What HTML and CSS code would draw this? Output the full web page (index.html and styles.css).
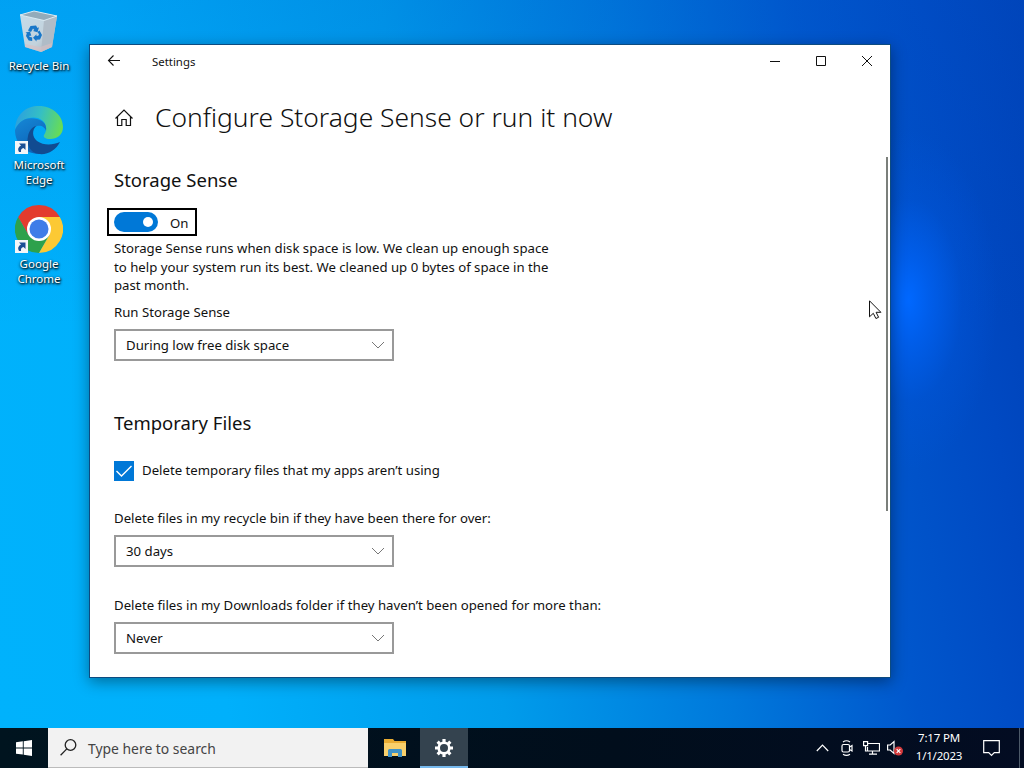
FILE: index.html
```html
<!DOCTYPE html>
<html lang="en">
<head>
    <meta charset="UTF-8">
    <meta name="viewport" content="width=device-width, initial-scale=1.0">
    <title>Settings</title>
    <link rel="stylesheet" href="styles.css">
</head>
<body>
    <div class="desktop">
        <div class="icons">
            <div class="icon">
                <svg width="48" height="50" viewBox="0 0 48 50">
                    <defs>
                        <linearGradient id="bin" x1="0" y1="0" x2="1" y2="1">
                            <stop offset="0" stop-color="#c3dcea"/>
                            <stop offset="0.6" stop-color="#c3d2dc"/>
                            <stop offset="1" stop-color="#a3adb8"/>
                        </linearGradient>
                    </defs>
                    <path d="M5 9L10 41L26 46L37 41L42 10L29 14z" fill="url(#bin)"/>
                    <path d="M29 14L42 10L37 41L26 46z" fill="#b0bcc7"/>
                    <path d="M5 9L19 5L42 10L29 14.500z" fill="#93abba" stroke="#dcebf3" stroke-width="1"/>
                    <path d="M10 38L25 41L37 37L36.500 41L26 46L10 41z" fill="#d8bfc3" opacity=".6"/>
                    <g fill="#1877c9">
                        <path d="M13 24.500l2.500-4.500 5.500-.5 1.500 2.500 1.500-.8-1.500 5-4.500-1.300 1.300-1-1.300-1.400-2 3.500z"/>
                        <path d="M24.500 24.500l2.500 4.500-2 4.500-3.500.3v1.700l-3.500-3.800 3.500-3.500v1.800l1.800-.3.700-1.500-1.500-2.300z"/>
                        <path d="M10.500 26.500l4.500-1 1.300 4.500-1.500-.6-.6 1.300 3 .8v3.500l-3.500-.5-2.700-4.500.8-2.700z"/>
                    </g>
                </svg>
                <span>Recycle Bin</span>
            </div>
            <div class="icon">
                <svg width="48" height="50" viewBox="0 0 48 50">
                    <defs>
                        <linearGradient id="edgeTop" x1="0" y1="0.3" x2="1" y2="0.5">
                            <stop offset="0" stop-color="#2b9fe0"/>
                            <stop offset="0.5" stop-color="#35bfc4"/>
                            <stop offset="1" stop-color="#68dc55"/>
                        </linearGradient>
                        <linearGradient id="edgeSide" x1="0" y1="0" x2="0.5" y2="1">
                            <stop offset="0" stop-color="#1688d6"/>
                            <stop offset="1" stop-color="#0c63b8"/>
                        </linearGradient>
                    </defs>
                    <path d="M0 24C1 9 11 1 24 1C38 1 48 11 48 22C48 30 42 34 35 34C30 34 28 32 29 30C32 26 32 20 28 16C20 9 6 13 0 24z" fill="url(#edgeTop)"/>
                    <path d="M0 25C5 13 15 12 22 14C29 16 32 20 31 26C30 22 26 20 22 21C16 24 14 30 16 36C18 43 24 48 30 48C14 52 0 41 0 25z" fill="url(#edgeSide)"/>
                    <path d="M21 21C17 25 17 32 22 36C29 41 38 40 45 37C41 45 33 50 24 49C15 48 11 39 13 31C14 26 17 22 21 21z" fill="#114b91"/>
                </svg>
                <svg class="shortcut" width="13" height="13" viewBox="0 0 13 13">
                    <rect width="13" height="13" fill="#f4f6f8"/>
                    <path d="M4 2.500h6.500v6.500l-2-2Q5.500 7.500 6 11H4Q1.500 7 6 4.500z" fill="#1a4f94"/>
                </svg>
                <span>Microsoft<br>Edge</span>
            </div>
            <div class="icon">
                <svg width="48" height="50" viewBox="0 0 48 50">
                    <path d="M3.200 13A24 24 0 0 0 24 49L34.400 31L24 25L13.600 31z" fill="#2da14c"/>
                    <path d="M44.800 13A24 24 0 0 1 24 49L34.400 31L24 13z" fill="#fcc934"/>
                    <path d="M24 13H44.800A24 24 0 0 0 3.200 13L13.600 31z" fill="#e33b2e"/>
                    <circle cx="24" cy="25" r="12" fill="#fff"/>
                    <circle cx="24" cy="25" r="9.500" fill="#3f7de8"/>
                </svg>
                <svg class="shortcut" width="13" height="13" viewBox="0 0 13 13">
                    <rect width="13" height="13" fill="#f4f6f8"/>
                    <path d="M4 2.500h6.500v6.500l-2-2Q5.500 7.500 6 11H4Q1.500 7 6 4.500z" fill="#1a4f94"/>
                </svg>
                <span>Google<br>Chrome</span>
            </div>
        </div>

        <div class="window">
            <div class="titlebar">
                <svg class="back" width="14" height="12" viewBox="0 0 14 12"><path d="M1.500 5.500h11.500M6.500 .5L1.500 5.500l5 5"/></svg>
                <span class="app-name">Settings</span>
                <div class="controls">
                    <svg width="46" height="32" viewBox="0 0 46 32"><path d="M18 16.500h10"/></svg>
                    <svg width="46" height="32" viewBox="0 0 46 32"><path d="M18.500 11.500h9v9h-9z"/></svg>
                    <svg width="46" height="32" viewBox="0 0 46 32"><path d="M18 11l10 10M28 11l-10 10"/></svg>
                </div>
            </div>
            <div class="page-header">
                <svg width="20" height="18" viewBox="0 0 20 18"><path d="M1.500 9.500L10 1l8.500 8.500M3.500 8v8.500h4.300v-6h4.400v6h4.300V8"/></svg>
                <h1>Configure Storage Sense or run it now</h1>
            </div>
            <div class="content">
                <h2>Storage Sense</h2>
                <div class="toggle">
                    <div class="switch"></div>
                    <span>On</span>
                </div>
                <p class="description">Storage Sense runs when disk space is low. We clean up enough space<br>to help your system run its best. We cleaned up 0 bytes of space in the<br>past month.</p>
                <div class="label run">Run Storage Sense</div>
                <div class="select">
                    <span>During low free disk space</span>
                    <svg width="14" height="8" viewBox="0 0 14 8"><path d="M1 1l6 6 6-6"/></svg>
                </div>
                <h2 class="temp">Temporary Files</h2>
                <div class="check">
                    <div class="box"><svg width="20" height="20" viewBox="0 0 20 20"><path d="M2.500 10l5 5L17.500 5"/></svg></div>
                    <span>Delete temporary files that my apps aren’t using</span>
                </div>
                <div class="label recycle">Delete files in my recycle bin if they have been there for over:</div>
                <div class="select">
                    <span>30 days</span>
                    <svg width="14" height="8" viewBox="0 0 14 8"><path d="M1 1l6 6 6-6"/></svg>
                </div>
                <div class="label downloads">Delete files in my Downloads folder if they haven’t been opened for more than:</div>
                <div class="select">
                    <span>Never</span>
                    <svg width="14" height="8" viewBox="0 0 14 8"><path d="M1 1l6 6 6-6"/></svg>
                </div>
            </div>
            <div class="scrollbar"></div>
        </div>

        <svg class="cursor" width="13" height="20" viewBox="0 0 13 20"><path d="M.5 .8v16l3.800-3.500 2.600 5.200 2.700-1.200-2.500-5h4.800z"/></svg>
    </div>

    <div class="taskbar">
        <div class="start">
            <svg width="16" height="16" viewBox="0 0 16 16"><path d="M0 2.300L6.800 1.300V7.500H0zM7.700 1.200L16 0V7.500H7.700zM0 8.400h6.800v6.200L0 13.700zM7.700 8.400H16V16l-8.300-1.200z" fill="#fff"/></svg>
        </div>
        <div class="search">
            <svg width="17" height="17" viewBox="0 0 17 17"><circle cx="10.500" cy="6" r="5.300"/><path d="M6.800 9.900L.6 16.200"/></svg>
            <span>Type here to search</span>
        </div>
        <div class="task explorer">
            <svg width="22" height="18" viewBox="0 0 22 18">
                <path d="M0 0h9l1.500 2H22v15H0z" fill="#e9ac32"/>
                <path d="M0 4h22v13H0z" fill="#f9d06b"/>
                <path d="M4 18v-6.500q0-1.500 1.500-1.500h11q1.500 0 1.500 1.500V18h-4v-4H8v4z" fill="#3f92c6"/>
            </svg>
        </div>
        <div class="task active">
            <svg width="20" height="20" viewBox="-10 -10 20 20">
                <circle r="5.300" fill="none" stroke="#fff" stroke-width="2.600"/>
                <g stroke="#fff" stroke-width="3.200">
                    <path d="M0-9v3M0 9V6M-9 0h3M9 0H6"/>
                    <path d="M0-9v3M0 9V6M-9 0h3M9 0H6" transform="rotate(45)"/>
                </g>
            </svg>
        </div>
        <div class="tray">
            <svg width="13" height="8" viewBox="0 0 13 8"><path d="M.8 7L6.500 1.200 12.200 7"/></svg>
            <svg class="meet" width="12" height="16" viewBox="0 0 12 16"><rect x="1" y="4.500" width="7.500" height="7.500" rx="1.500"/><path d="M8.500 7L11 5.500v5.500L8.500 9.500M2 2Q5.500-.5 9 2M2 14.200Q5.500 16.500 9 14.200"/></svg>
            <svg class="network" width="17" height="14" viewBox="0 0 17 14"><path d="M5 2.500h11.500v7.500H4.500V6M9.500 10v3M6 13.200h8M.6 .6h4v4h-4zM2.500 4.600V10h2"/></svg>
            <svg class="sound" width="17" height="16" viewBox="0 0 17 16"><path d="M.6 5h2.600L7 1.500v12L3.200 10H.6z"/><circle cx="11.500" cy="11" r="4.500" fill="#d33a3c" stroke="none"/><path d="M9.700 9.200l3.600 3.600M13.300 9.200l-3.600 3.600"/></svg>
            <div class="clock">
                <span>7:17 PM</span>
                <span>1/1/2023</span>
            </div>
            <svg class="notes" width="17" height="17" viewBox="0 0 17 17"><path d="M.7 .7h15.600v12h-5L8.500 15.500 5.700 12.700h-5z"/></svg>
        </div>
        <div class="show-desktop"></div>
    </div>
</body>
</html>
```
FILE: styles.css
```css
* {
    margin: 0;
    padding: 0;
    box-sizing: border-box;
}
body {
    width: 1024px;
    height: 768px;
    overflow: hidden;
    display: flex;
    flex-direction: column;
    font-family: "Noto Sans", "Open Sans", sans-serif;
    font-size: 13.2px;
    color: #111;
}
svg {
    display: block;
    flex: none;
}
span, h1, h2, .label, .description {
    white-space: nowrap;
}

/* desktop */
.desktop {
    position: relative;
    flex: 1;
    background:
        radial-gradient(ellipse 90px 170px at 908px 300px, #0068ff 0%, rgba(0, 98, 245, 0.75) 25%, rgba(0, 88, 225, 0.3) 60%, rgba(0, 80, 210, 0) 100%),
        linear-gradient(to bottom, rgba(0, 90, 205, 0.18), rgba(0, 100, 220, 0) 45%),
        linear-gradient(80deg, #00b2fc 0%, #00b0fb 20%, #009ceb 44%, #0078db 64%, #0056cc 80%, #0049c2 91%, #0040b6 100%);
}
.icons {
    width: 78px;
    padding-top: 6px;
    display: flex;
    flex-direction: column;
}
.icon {
    position: relative;
    height: 99px;
    display: flex;
    flex-direction: column;
    align-items: center;
}
.icon span {
    margin-top: 2px;
    font-size: 11.5px;
    line-height: 15px;
    text-align: center;
    color: #fff;
    text-shadow: 1px 1px 2px #000, 0 1px 3px rgba(0, 0, 0, 0.8);
}
.shortcut {
    position: absolute;
    left: 15px;
    top: 36px;
}
.cursor {
    position: absolute;
    left: 869px;
    top: 300px;
    fill: #fff;
    stroke: #111;
}

/* settings window */
.window {
    position: absolute;
    left: 89px;
    top: 44px;
    width: 802px;
    height: 634px;
    background: #fff;
    border: 1px solid #0d4b80;
    box-shadow: 0 4px 14px rgba(0, 0, 0, 0.38);
}
.titlebar {
    height: 32px;
    display: flex;
    align-items: center;
    padding-left: 17px;
}
.titlebar svg,
.page-header svg {
    fill: none;
    stroke: #111;
}
.titlebar .back {
    stroke-width: 1.1;
}
.app-name {
    margin-left: 31px;
    font-size: 11.4px;
}
.controls {
    display: flex;
    margin-left: auto;
}
.page-header {
    height: 82px;
    display: flex;
    align-items: center;
    padding-left: 24px;
}
.page-header svg {
    stroke-width: 1.2;
}
h1 {
    margin-left: 21px;
    padding-bottom: 2px;
    font-size: 26.4px;
    font-weight: 300;
}
.content {
    padding-left: 24px;
}
h2 {
    height: 44px;
    line-height: 41px;
    font-size: 18.5px;
    font-weight: 400;
}
h2.temp {
    margin-top: 40px;
    line-height: 43px;
}
.toggle {
    width: 90px;
    height: 28px;
    margin: 5px 0 3px -7px;
    padding-left: 5px;
    border: 2px solid #000;
    display: flex;
    align-items: center;
}
.toggle span {
    margin-left: 12px;
    padding-top: 2px;
}
.switch {
    width: 44px;
    height: 20px;
    padding: 5px;
    border-radius: 10px;
    background: #0078d7;
}
.switch::after {
    content: '';
    display: block;
    width: 10px;
    height: 10px;
    margin-left: auto;
    border-radius: 50%;
    background: #fff;
}
.description {
    line-height: 18.5px;
}
.label {
    height: 18px;
    line-height: 18px;
    margin-bottom: 8px;
}
.label.run {
    margin-top: 8.5px;
}
.label.recycle {
    margin-top: 28px;
}
.label.downloads {
    margin-top: 29px;
}
.select {
    width: 280px;
    height: 32px;
    padding: 0 7px 0 10px;
    border: 2px solid #999;
    display: flex;
    align-items: center;
    justify-content: space-between;
}
.select svg {
    fill: none;
    stroke: #777;
}
.check {
    display: flex;
    align-items: center;
    height: 20px;
    margin-top: 16px;
}
.check span {
    margin-left: 8px;
    padding-bottom: 2px;
    line-height: 18px;
}
.box {
    width: 20px;
    height: 20px;
    background: #0078d7;
}
.box svg {
    fill: none;
    stroke: #fff;
    stroke-width: 1.4;
}
.scrollbar {
    position: absolute;
    top: 112px;
    right: 2px;
    width: 2px;
    height: 354px;
    background: #7b7f7b;
}

/* taskbar */
.taskbar {
    height: 40px;
    display: flex;
    background: linear-gradient(to right, #00141f, #010e1c 60%, #030c22);
}
.start {
    width: 48px;
    display: flex;
    align-items: center;
    justify-content: center;
}
.search {
    width: 320px;
    display: flex;
    align-items: center;
    padding-left: 12px;
    background: #f2f2f2;
    border-bottom: 1px solid #bbb;
}
.search svg {
    fill: none;
    stroke: #222;
    stroke-width: 1.3;
}
.search span {
    margin-left: 11px;
    padding-top: 1px;
    font-size: 13.9px;
    color: #444;
}
.task {
    width: 48px;
    display: flex;
    align-items: center;
    justify-content: center;
}
.explorer {
    width: 52px;
    padding-left: 2px;
}
.active {
    padding-top: 2px;
    background: #34434f;
    border-bottom: 2px solid #76b9ed;
}
.tray {
    display: flex;
    align-items: center;
    margin-left: auto;
    margin-right: 19px;
}
.tray svg {
    fill: none;
    stroke: #fff;
    stroke-width: 1.2;
}
.meet {
    margin-left: 12px;
}
.network {
    margin-left: 10px;
}
.sound {
    margin-left: 7px;
}
.clock {
    width: 60px;
    margin: 0 7px 2px 5px;
    display: flex;
    flex-direction: column;
    font-size: 11.5px;
    line-height: 18px;
    text-align: center;
    letter-spacing: -0.2px;
    color: #fff;
}
.notes {
    margin-left: 7px;
}
.show-desktop {
    width: 5px;
    border-left: 1px solid #4d5a69;
}
```
